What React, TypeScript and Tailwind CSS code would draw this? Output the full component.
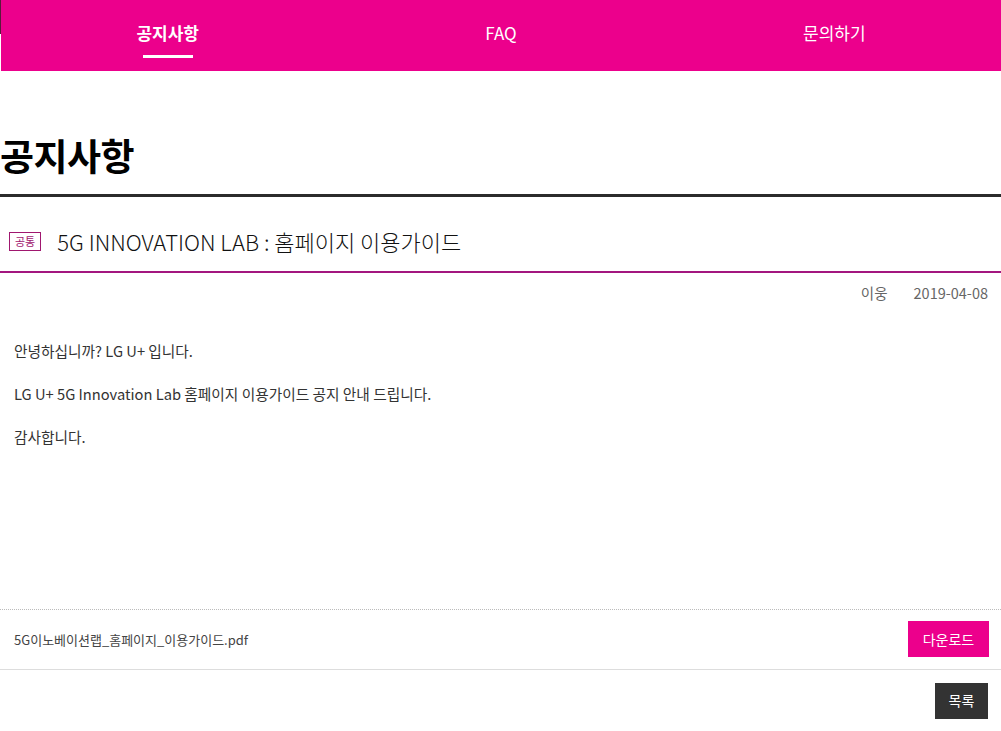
import { useState } from 'react'

const tabs = ['공지사항', 'FAQ', '문의하기']

export default function App() {
  const [active] = useState(0)

  return (
    <div
      className="w-[1001px] min-h-[731px] bg-white text-[#222]"
      style={{ fontFamily: '"Noto Sans CJK KR", "Noto Sans", sans-serif' }}
    >
      {/* top tabs */}
      <div className="flex h-[71px]">
        <div className="w-px h-[34px] bg-[#5a1a3c]" />
        <nav className="flex flex-1 bg-[#ec008c]">
          {tabs.map((t, i) => (
            <div key={t} className="flex-1 flex flex-col items-center pt-[20px]">
              <span
                className={`text-[17px] leading-[26px] text-white ${
                  i === active ? 'font-bold' : ''
                }`}
              >
                {t}
              </span>
              {i === active && <span className="mt-[9px] w-[50px] h-[3px] bg-white" />}
            </div>
          ))}
        </nav>
      </div>

      {/* page heading */}
      <h1 className="mt-[60px] text-[37px] leading-[48px] font-bold tracking-[-0.5px] text-black">
        공지사항
      </h1>
      <div className="mt-[15px] h-[3px] bg-[#2b2b2b]" />

      {/* notice title */}
      <div className="flex items-center h-[74px] pl-[9px] pt-[14px]">
        <span className="border border-[#a0176f] text-[#a0176f] text-[11px] leading-[17px] px-[5px]">
          공통
        </span>
        <span className="ml-[16px] text-[22px] font-light text-[#111]">
          5G INNOVATION LAB : 홈페이지 이용가이드
        </span>
      </div>
      <div className="h-[2px] bg-[#a3167f]" />

      <div className="flex justify-end gap-[26px] pr-[13px] pt-[9px] text-[14.5px] text-[#666]">
        <span>이웅</span>
        <span>2019-04-08</span>
      </div>

      {/* body */}
      <div className="px-[14px] pt-[36px] text-[14.7px] leading-[22px] text-[#333] flex flex-col gap-[21px] h-[305px]">
        <p>안녕하십니까? LG U+ 입니다.</p>
        <p>LG U+ 5G Innovation Lab 홈페이지 이용가이드 공지 안내 드립니다.</p>
        <p>감사합니다.</p>
      </div>

      {/* attachment */}
      <div className="border-t border-dotted border-[#bbb] flex items-center justify-between h-[60px] pl-[14px] pr-[12px]">
        <span className="text-[13px] text-[#444]">5G이노베이션랩_홈페이지_이용가이드.pdf</span>
        <button className="bg-[#ec008c] text-white text-[14px] w-[81px] h-[36px]">다운로드</button>
      </div>
      <div className="h-px bg-[#ddd]" />

      <div className="flex justify-end pr-[13px] pt-[13px]">
        <button className="bg-[#333] text-white text-[14px] w-[53px] h-[36px]">목록</button>
      </div>
    </div>
  )
}
